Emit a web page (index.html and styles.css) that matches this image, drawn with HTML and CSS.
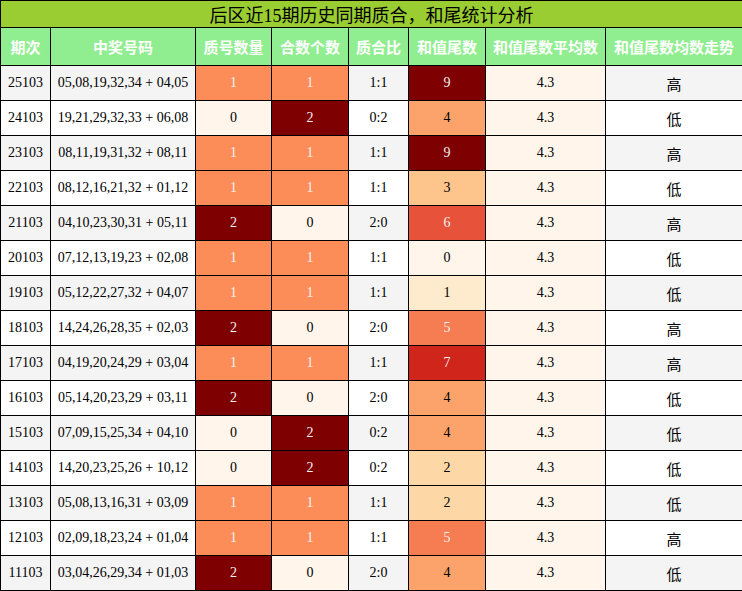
FILE: index.html
```html
<!DOCTYPE html>
<html lang="zh">
<head>
<meta charset="utf-8">
<title>后区近15期历史同期质合，和尾统计分析</title>
<link rel="stylesheet" href="styles.css">
</head>
<body>
<table class="stat">
  <colgroup>
    <col class="c1"><col class="c2"><col class="c3"><col class="c4"><col class="c5"><col class="c6"><col class="c7"><col class="c8">
  </colgroup>
  <thead>
    <tr class="title"><th colspan="8">后区近15期历史同期质合，和尾统计分析</th></tr>
    <tr class="head">
      <th>期次</th><th>中奖号码</th><th>质号数量</th><th>合数个数</th><th>质合比</th><th>和值尾数</th><th>和值尾数平均数</th><th>和值尾数均数走势</th>
    </tr>
  </thead>
  <tbody>
    <tr class="odd"><td>25103</td><td>05,08,19,32,34 + 04,05</td><td class="m1">1</td><td class="m1">1</td><td>1:1</td><td class="t9">9</td><td class="avg">4.3</td><td class="trend">高</td></tr>
    <tr><td>24103</td><td>19,21,29,32,33 + 06,08</td><td class="m0">0</td><td class="m2">2</td><td>0:2</td><td class="t4">4</td><td class="avg">4.3</td><td class="trend">低</td></tr>
    <tr class="odd"><td>23103</td><td>08,11,19,31,32 + 08,11</td><td class="m1">1</td><td class="m1">1</td><td>1:1</td><td class="t9">9</td><td class="avg">4.3</td><td class="trend">高</td></tr>
    <tr><td>22103</td><td>08,12,16,21,32 + 01,12</td><td class="m1">1</td><td class="m1">1</td><td>1:1</td><td class="t3">3</td><td class="avg">4.3</td><td class="trend">低</td></tr>
    <tr class="odd"><td>21103</td><td>04,10,23,30,31 + 05,11</td><td class="m2">2</td><td class="m0">0</td><td>2:0</td><td class="t6">6</td><td class="avg">4.3</td><td class="trend">高</td></tr>
    <tr><td>20103</td><td>07,12,13,19,23 + 02,08</td><td class="m1">1</td><td class="m1">1</td><td>1:1</td><td class="t0">0</td><td class="avg">4.3</td><td class="trend">低</td></tr>
    <tr class="odd"><td>19103</td><td>05,12,22,27,32 + 04,07</td><td class="m1">1</td><td class="m1">1</td><td>1:1</td><td class="t1">1</td><td class="avg">4.3</td><td class="trend">低</td></tr>
    <tr><td>18103</td><td>14,24,26,28,35 + 02,03</td><td class="m2">2</td><td class="m0">0</td><td>2:0</td><td class="t5">5</td><td class="avg">4.3</td><td class="trend">高</td></tr>
    <tr class="odd"><td>17103</td><td>04,19,20,24,29 + 03,04</td><td class="m1">1</td><td class="m1">1</td><td>1:1</td><td class="t7">7</td><td class="avg">4.3</td><td class="trend">高</td></tr>
    <tr><td>16103</td><td>05,14,20,23,29 + 03,11</td><td class="m2">2</td><td class="m0">0</td><td>2:0</td><td class="t4">4</td><td class="avg">4.3</td><td class="trend">低</td></tr>
    <tr class="odd"><td>15103</td><td>07,09,15,25,34 + 04,10</td><td class="m0">0</td><td class="m2">2</td><td>0:2</td><td class="t4">4</td><td class="avg">4.3</td><td class="trend">低</td></tr>
    <tr><td>14103</td><td>14,20,23,25,26 + 10,12</td><td class="m0">0</td><td class="m2">2</td><td>0:2</td><td class="t2">2</td><td class="avg">4.3</td><td class="trend">低</td></tr>
    <tr class="odd"><td>13103</td><td>05,08,13,16,31 + 03,09</td><td class="m1">1</td><td class="m1">1</td><td>1:1</td><td class="t2">2</td><td class="avg">4.3</td><td class="trend">低</td></tr>
    <tr><td>12103</td><td>02,09,18,23,24 + 01,04</td><td class="m1">1</td><td class="m1">1</td><td>1:1</td><td class="t5">5</td><td class="avg">4.3</td><td class="trend">高</td></tr>
    <tr class="odd"><td>11103</td><td>03,04,26,29,34 + 01,03</td><td class="m2">2</td><td class="m0">0</td><td>2:0</td><td class="t4">4</td><td class="avg">4.3</td><td class="trend">低</td></tr>
  </tbody>
</table>
</body>
</html>
```
FILE: styles.css
```css
html, body {
  margin: 0;
  padding: 0;
  background: #ffffff;
}

.stat {
  border-collapse: collapse;
  table-layout: fixed;
  width: 742px;
  font-family: "Liberation Serif", "Noto Sans CJK SC", serif;
  font-size: 14px;
  color: #000;
}

.c1 { width: 50px; }
.c2 { width: 145px; }
.c3 { width: 76px; }
.c4 { width: 77px; }
.c5 { width: 60px; }
.c6 { width: 77px; }
.c7 { width: 120px; }
.c8 { width: 137px; }

.stat th,
.stat td {
  border: 1px solid #000;
  padding: 0;
  text-align: center;
  vertical-align: middle;
}

.title th {
  height: 26px;
  background: #9acd32;
  font-size: 18px;
  font-weight: normal;
  color: #000;
}

.head th {
  height: 37px;
  background: #90ee90;
  color: #fff;
  font-size: 15px;
  font-weight: bold;
  font-family: "Noto Sans CJK SC", sans-serif;
}

.stat td {
  height: 34px;
  background: #ffffff;
}

.stat tr.odd td {
  background: #f4f4f4;
}

.stat td.trend {
  font-family: "Noto Sans CJK SC", sans-serif;
  font-size: 15px;
}

.stat tr td.avg { background: #fff5eb; }

.stat tr td.m0 { background: #fff5eb; color: #000; }
.stat tr td.m1 { background: #fc8d59; color: #f1f1f1; }
.stat tr td.m2 { background: #7f0000; color: #f1f1f1; }

.stat tr td.t0 { background: #fff5eb; color: #000; }
.stat tr td.t1 { background: #feeacd; color: #000; }
.stat tr td.t2 { background: #fdd8a6; color: #000; }
.stat tr td.t3 { background: #fdc48c; color: #000; }
.stat tr td.t4 { background: #fca36b; color: #000; }
.stat tr td.t5 { background: #f67c51; color: #f1f1f1; }
.stat tr td.t6 { background: #e7533a; color: #f1f1f1; }
.stat tr td.t7 { background: #cf251a; color: #f1f1f1; }
.stat tr td.t9 { background: #7f0000; color: #f1f1f1; }
```
